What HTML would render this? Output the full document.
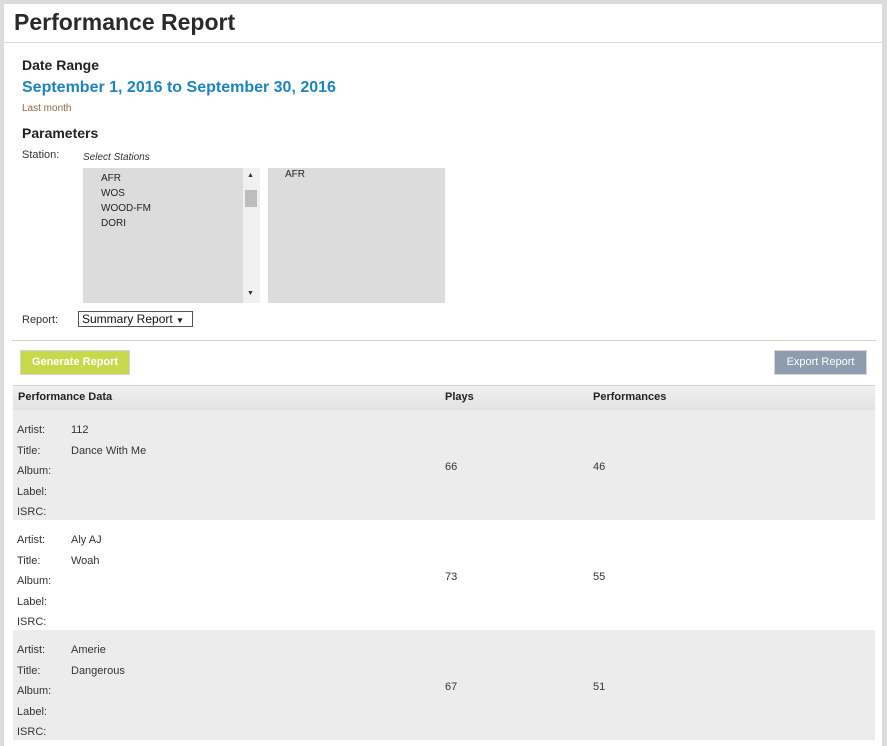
<!DOCTYPE html>
<html><head><style>
*{margin:0;padding:0;box-sizing:border-box}
body{width:887px;height:746px;background:#dcdcdc;font-family:"Liberation Sans",sans-serif;overflow:hidden;position:relative}
.page{position:absolute;left:4px;top:4px;width:878px;height:742px;background:#fff}
.a{position:absolute;white-space:nowrap}
.lbl{font-size:11px;color:#333}
.row{position:absolute;left:9px;width:862px;height:110px}
.row .a{font-size:11px;color:#333}
</style></head><body>
<div class="page">
<div class="a" style="left:10px;top:5px;font-size:23px;font-weight:bold;color:#2a2a2a">Performance Report</div>
<div class="a" style="left:0;top:38px;width:878px;height:1px;background:#d8d8e0"></div>
<div class="a" style="left:18px;top:53px;font-size:14px;font-weight:bold;color:#222">Date Range</div>
<div class="a" style="left:18px;top:75px;font-size:16px;font-weight:bold;color:#1a85c2">September 1, 2016 to September 30, 2016</div>
<div class="a" style="left:18px;top:99px;font-size:10px;color:#8a6a4a">Last month</div>
<div class="a" style="left:18px;top:121px;font-size:14px;font-weight:bold;color:#222">Parameters</div>
<div class="a lbl" style="left:18px;top:145px">Station:</div>
<div class="a" style="left:79px;top:148px;font-size:10px;font-style:italic;color:#333">Select Stations</div>
<div class="a" style="left:79px;top:164px;width:160px;height:135px;background:#dcdcdc"></div>
<div class="a" style="left:239px;top:164px;width:17px;height:135px;background:#f0f0f0"></div>
<div class="a" style="left:241px;top:186px;width:12px;height:17px;background:#bdbdbd"></div>
<div class="a" style="left:243px;top:168px;font-size:7px;color:#333">▲</div>
<div class="a" style="left:243px;top:286px;font-size:7px;color:#333">▼</div>
<div class="a" style="left:97px;top:167px;font-size:10px;color:#222;line-height:15px">AFR<br>WOS<br>WOOD-FM<br>DORI</div>
<div class="a" style="left:264px;top:164px;width:177px;height:135px;background:#dcdcdc"></div>
<div class="a" style="left:281px;top:165px;font-size:10px;color:#222">AFR</div>
<div class="a lbl" style="left:18px;top:310px">Report:</div>
<div class="a" style="left:74px;top:307px;width:115px;height:16px;border:1px solid #555;background:#fff;font-size:12px;color:#111;padding-left:3px;line-height:14px">Summary Report <span style="font-size:8px">▼</span></div>
<div class="a" style="left:8px;top:336px;width:864px;height:1px;background:#d0d0d0"></div>
<div class="a" style="left:16px;top:346px;width:110px;height:25px;background:#c7d84a;border:1px solid #d8d0e0;color:#fff;font-size:11px;font-weight:bold;text-align:center;line-height:23px">Generate Report</div>
<div class="a" style="left:770px;top:346px;width:93px;height:25px;background:#8e9dad;border:1px solid #d8d0e0;color:#fff;font-size:11px;text-align:center;line-height:23px">Export Report</div>
<div class="a" style="left:9px;top:381px;width:862px;height:25px;background:linear-gradient(#f0f0f0,#e2e2e2);border-top:1px solid #d0d0d0"></div>
<div class="a" style="left:14px;top:387px;font-size:11px;font-weight:bold;color:#222">Performance Data</div>
<div class="a" style="left:441px;top:387px;font-size:11px;font-weight:bold;color:#222">Plays</div>
<div class="a" style="left:589px;top:387px;font-size:11px;font-weight:bold;color:#222">Performances</div>

<div class="row" style="top:406px;background:#ececec">
<div class="a" style="left:4px;top:10px;line-height:20.5px">Artist:<br>Title:<br>Album:<br>Label:<br>ISRC:</div>
<div class="a" style="left:58px;top:10px;line-height:20.5px">112<br>Dance With Me</div>
<div class="a" style="left:432px;top:51px">66</div><div class="a" style="left:580px;top:51px">46</div></div>
<div class="row" style="top:516px;background:#fff">
<div class="a" style="left:4px;top:10px;line-height:20.5px">Artist:<br>Title:<br>Album:<br>Label:<br>ISRC:</div>
<div class="a" style="left:58px;top:10px;line-height:20.5px">Aly AJ<br>Woah</div>
<div class="a" style="left:432px;top:51px">73</div><div class="a" style="left:580px;top:51px">55</div></div>
<div class="row" style="top:626px;background:#ececec">
<div class="a" style="left:4px;top:10px;line-height:20.5px">Artist:<br>Title:<br>Album:<br>Label:<br>ISRC:</div>
<div class="a" style="left:58px;top:10px;line-height:20.5px">Amerie<br>Dangerous</div>
<div class="a" style="left:432px;top:51px">67</div><div class="a" style="left:580px;top:51px">51</div></div>
</div>
</body></html>
